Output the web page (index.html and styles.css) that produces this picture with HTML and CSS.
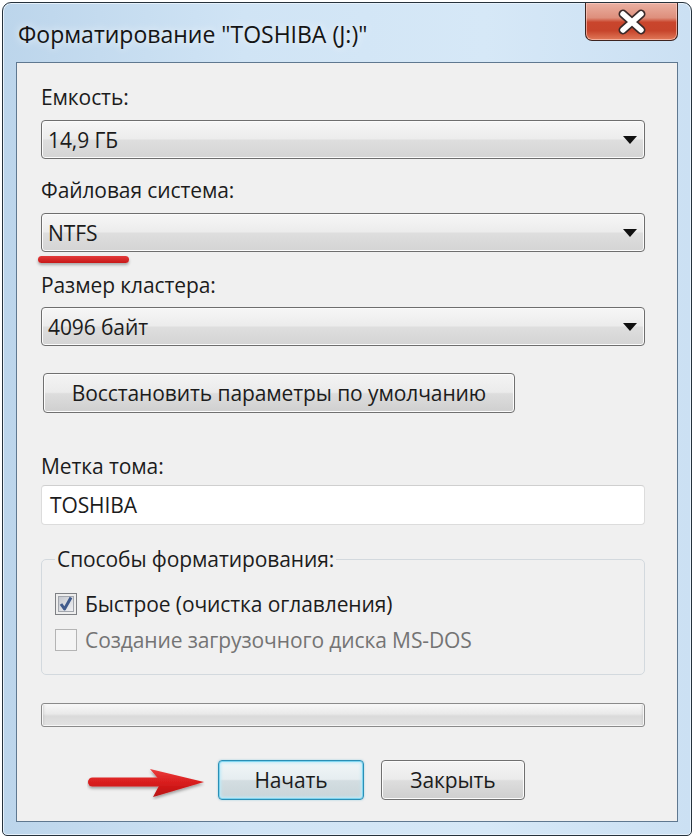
FILE: index.html
```html
<!DOCTYPE html>
<html lang="ru">
<head>
<meta charset="utf-8">
<title>Форматирование</title>
<link rel="stylesheet" href="styles.css">
</head>
<body>
<div class="window">
  <div class="titlebar">
    <div class="title">Форматирование "TOSHIBA (J:)"</div>
    <div class="close">
      <svg width="32" height="26" viewBox="0 0 32 26">
        <path d="M7 5 L25 21 M25 5 L7 21" stroke="#3a2a2a" stroke-width="9" stroke-linecap="round"/>
        <path d="M7 5 L25 21 M25 5 L7 21" stroke="#ffffff" stroke-width="5.5" stroke-linecap="round"/>
      </svg>
    </div>
  </div>
  <div class="client">
    <div class="label">Емкость:</div>
    <div class="combo"><span class="value">14,9 ГБ</span><span class="arrow"></span></div>

    <div class="label l-next">Файловая система:</div>
    <div class="combo marked"><span class="value">NTFS</span><span class="arrow"></span><span class="underline"></span></div>

    <div class="label l-third">Размер кластера:</div>
    <div class="combo c-third"><span class="value">4096 байт</span><span class="arrow"></span></div>

    <div class="btn restore">Восстановить параметры по умолчанию</div>

    <div class="label l-volume">Метка тома:</div>
    <div class="textbox">TOSHIBA</div>

    <fieldset class="group">
      <legend>Способы форматирования:</legend>
      <div class="check-row">
        <svg class="cb" width="22" height="22" viewBox="0 0 22 22">
          <defs>
            <linearGradient id="cbg" x1="0" y1="0" x2="1" y2="1">
              <stop offset="0" stop-color="#c3c7ce"/>
              <stop offset="1" stop-color="#f0f1f4"/>
            </linearGradient>
          </defs>
          <rect x="0.5" y="0.5" width="21" height="21" fill="#ededed" stroke="#7e8084"/>
          <rect x="3.5" y="3.5" width="15" height="15" fill="url(#cbg)" stroke="#a2a6ad"/>
          <path d="M6 11 L9.5 16 L16 4.5" fill="none" stroke="#3f5a8c" stroke-width="3" stroke-linejoin="round"/>
        </svg>
        <span>Быстрое (очистка оглавления)</span>
      </div>
      <div class="check-row disabled">
        <svg class="cb" width="22" height="22" viewBox="0 0 22 22">
          <rect x="0.5" y="0.5" width="21" height="21" fill="#f4f4f4" stroke="#b4b4b4"/>
        </svg>
        <span>Создание загрузочного диска MS-DOS</span>
      </div>
    </fieldset>

    <div class="progress"></div>

    <div class="actions">
      <svg class="arrow-mark" width="118" height="40" viewBox="0 0 118 40">
        <defs>
          <filter id="sh" x="-10%" y="-30%" width="130%" height="170%">
            <feDropShadow dx="0" dy="2" stdDeviation="1.6" flood-color="#000" flood-opacity="0.35"/>
          </filter>
          <linearGradient id="ar" gradientUnits="userSpaceOnUse" x1="0" y1="8" x2="0" y2="38">
            <stop offset="0" stop-color="#ec4040"/>
            <stop offset="0.5" stop-color="#d81c1c"/>
            <stop offset="1" stop-color="#b51010"/>
          </linearGradient>
        </defs>
        <g filter="url(#sh)">
          <rect x="1" y="17.5" width="74" height="9" rx="4.5" fill="url(#ar)"/>
          <path d="M63 9 L117 22 L66 37 L74 22 Z" fill="url(#ar)"/>
        </g>
      </svg>
      <div class="btn start">Начать</div>
      <div class="btn close-btn">Закрыть</div>
    </div>
  </div>
</div>
</body>
</html>
```

FILE: styles.css
```css
* { box-sizing: border-box; }

html, body {
  margin: 0;
  padding: 0;
  background: #ffffff;
}

body {
  font-family: "Open Sans", "Noto Sans", "DejaVu Sans", sans-serif;
  font-size: 21px;
  letter-spacing: -0.1px;
  color: #1c1c1c;
}

.window {
  margin: 2px;
  width: 690px;
  height: 834px;
  border: 1px solid #26323c;
  border-radius: 9px 9px 5px 5px;
  background: linear-gradient(90deg, #bcd5eb 0%, #d0e4f5 35%, #d6e8f7 70%, #cbe0f3 100%);
  box-shadow: inset 0 0 0 1px #e6f1fb;
  padding: 0 13px 13px 13px;
  display: flex;
  flex-direction: column;
}

.titlebar {
  height: 59px;
  display: flex;
  justify-content: space-between;
  align-items: flex-start;
}

.title {
  margin-left: 2px;
  margin-top: 16px;
  line-height: 30px;
  font-size: 23px;
  letter-spacing: 0;
  color: #151515;
  text-shadow: 0 0 8px rgba(255,255,255,0.9);
}

.close {
  width: 93px;
  height: 38px;
  border: 1px solid #3d2420;
  border-top: none;
  border-radius: 0 0 7px 7px;
  background: linear-gradient(#eab0a2 0%, #de8f7c 40%, #c9452c 52%, #c7442b 75%, #e17a5a 100%);
  box-shadow: inset 0 0 0 1px rgba(255,210,200,0.6);
  display: flex;
  align-items: center;
  justify-content: center;
}

.client {
  flex: 1;
  background: #f0f0f0;
  border: 1px solid #5f7890;
  padding: 21px 32px 19px 24px;
  display: flex;
  flex-direction: column;
}

.label {
  line-height: 26px;
  height: 26px;
}

.l-next { margin-top: 18px; }
.l-third { margin-top: 20px; }
.l-volume { margin-top: 40px; }

.combo {
  position: relative;
  margin-top: 10px;
  height: 39px;
  border: 1px solid #6e6e6e;
  border-radius: 4px;
  background: linear-gradient(#f6f6f6 0%, #ececec 48%, #dedede 52%, #d4d4d4 100%);
  box-shadow: inset 0 0 0 1px #fbfbfb;
  display: flex;
  align-items: center;
  justify-content: space-between;
  padding: 0 7px 0 6px;
}

.c-third { margin-top: 9px; }

.combo .value {
  line-height: 26px;
}

.arrow {
  width: 0;
  height: 0;
  border-left: 7px solid transparent;
  border-right: 7px solid transparent;
  border-top: 8px solid #101010;
}

.underline {
  position: absolute;
  left: -4px;
  top: calc(100% + 5px);
  width: 91px;
  height: 7px;
  border-radius: 4px;
  background: linear-gradient(#e23a3a, #c81818);
  box-shadow: 0 2px 3px rgba(0,0,0,0.3);
}

.btn {
  height: 40px;
  border: 1px solid #707070;
  border-radius: 4px;
  background: linear-gradient(#f4f4f4 0%, #ebebeb 48%, #dddddd 52%, #cfcfcf 100%);
  box-shadow: inset 0 0 0 1px #fcfcfc;
  display: flex;
  align-items: center;
  justify-content: center;
  line-height: 26px;
}

.restore {
  margin-top: 27px;
  margin-left: 2px;
  width: 472px;
}

.textbox {
  margin-top: 6px;
  height: 40px;
  background: #ffffff;
  border: 1px solid #dcdcdc;
  border-top-color: #cfcfcf;
  border-radius: 4px;
  padding-left: 8px;
  display: flex;
  align-items: center;
  line-height: 26px;
}

.group {
  margin: 21px 0 0 0;
  min-width: 0;
  border: 1px solid #d3d9de;
  border-radius: 5px;
  padding: 17px 12px 19px 13px;
  display: flex;
  flex-direction: column;
  gap: 6px;
}

.group legend {
  padding: 0 2px;
  line-height: 26px;
  margin-left: 0;
}

.check-row {
  height: 30px;
  display: flex;
  align-items: center;
  gap: 8px;
  line-height: 26px;
}

.cb { flex: none; }

.check-row.disabled { color: #747474; }

.progress {
  margin-top: 28px;
  height: 24px;
  border: 1px solid #8a8a8a;
  border-radius: 3px;
  background: linear-gradient(#f8f8f8 0%, #e9e9e9 45%, #dadada 55%, #e2e2e2 100%);
  box-shadow: inset 0 0 0 1px #f6f6f6, inset 3px 0 3px -2px #bdbdbd, inset -3px 0 3px -2px #bdbdbd;
}

.actions {
  margin-top: 33px;
  padding-left: 46px;
  display: flex;
  align-items: center;
  gap: 13px;
}

.arrow-mark { flex: none; }

.start {
  width: 146px;
  border-color: #2a8fb5;
  box-shadow: inset 0 0 0 1px #7fd4ef, inset 0 0 3px 2px #bfeaf8, 0 0 2px rgba(60,170,210,0.5);
  background: linear-gradient(#f1f6f8 0%, #e6edf0 48%, #d3dde1 52%, #c9d4d8 100%);
}

.close-btn {
  width: 144px;
  margin-left: 4px;
}
```
